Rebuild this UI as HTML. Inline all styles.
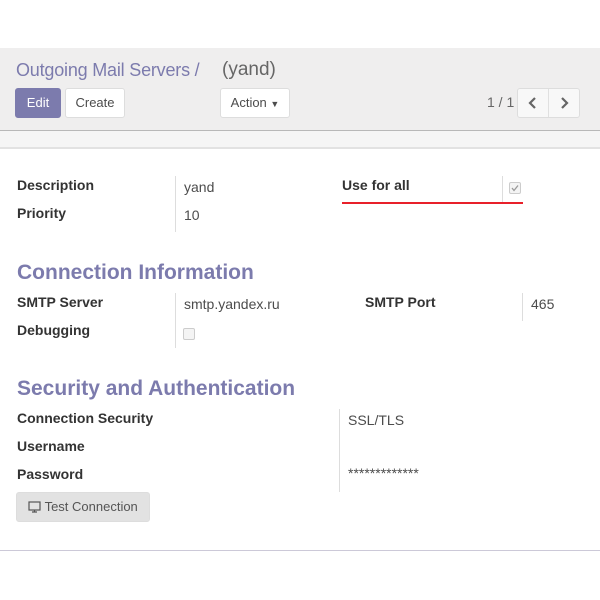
<!DOCTYPE html>
<html><head><meta charset="utf-8"><style>
body{margin:0;width:600px;height:600px;background:#fff;position:relative;font-family:"Liberation Sans",Arial,sans-serif;overflow:hidden;color:#4c4c4c}
.a{position:absolute;white-space:nowrap}
.hdr{position:absolute;left:0;top:48px;width:600px;height:82px;background:#efeeee;border-bottom:1px solid #b8b8b8}
.strip{position:absolute;left:0;top:131px;width:600px;height:16px;background:#f5f5f5;border-bottom:2px solid #e2e2e2}
.btn{position:absolute;height:30px;box-sizing:border-box;border:1px solid #ddd;background:#fff;border-radius:3px;font-size:13px;line-height:28px;text-align:center;color:#4c4c4c}
.lbl{font-weight:bold;font-size:14px;color:#333}
.val{font-size:14px;color:#4c4c4c}
.h{font-weight:bold;font-size:21px;color:#7c7bad}
.vl{position:absolute;width:1px;background:#ddd}
.cb{position:absolute;width:10px;height:10px;border:1px solid #ccc;border-radius:2px;background:#f4f4f4}
</style></head><body>
<div class="hdr"></div>
<div class="a" style="left:16px;top:60px;font-size:18px;color:#7c7bad;letter-spacing:-0.2px">Outgoing Mail Servers /</div>
<div class="a" style="left:222px;top:59px;font-size:19px;color:#666">(yand)</div>
<div class="btn" style="left:15px;top:88px;width:46px;background:#7c7bad;border-color:#7c7bad;color:#fff">Edit</div>
<div class="btn" style="left:65px;top:88px;width:60px">Create</div>
<div class="btn" style="left:220px;top:88px;width:70px">Action <span style="font-size:9px">▼</span></div>
<div class="a" style="left:487px;top:94px;font-size:14px;color:#666">1 / 1</div>
<div class="btn" style="left:517px;top:88px;width:63px;background:#f8f8f8"></div>
<div class="vl" style="left:548px;top:89px;height:28px;background:#e0e0e0"></div>
<svg class="a" style="left:527px;top:96px" width="12" height="14"><path d="M8 2 L3 7 L8 12" stroke="#666" stroke-width="2.2" fill="none"/></svg>
<svg class="a" style="left:558px;top:96px" width="12" height="14"><path d="M4 2 L9 7 L4 12" stroke="#666" stroke-width="2.2" fill="none"/></svg>
<div class="strip"></div>

<div class="a lbl" style="left:17px;top:177px">Description</div>
<div class="a lbl" style="left:17px;top:205px">Priority</div>
<div class="vl" style="left:175px;top:176px;height:56px"></div>
<div class="a val" style="left:184px;top:179px">yand</div>
<div class="a val" style="left:184px;top:207px">10</div>
<div class="a lbl" style="left:342px;top:177px">Use for all</div>
<div class="vl" style="left:502px;top:176px;height:28px"></div>
<div class="cb" style="left:509px;top:182px"></div>
<svg class="a" style="left:510px;top:183px" width="10" height="10"><path d="M2 5 L4 7.5 L8 2.5" stroke="#999" stroke-width="1.3" fill="none"/></svg>
<div class="a" style="left:342px;top:202px;width:181px;height:2px;background:#e8202a"></div>

<div class="a h" style="left:17px;top:261px">Connection Information</div>
<div class="a lbl" style="left:17px;top:294px">SMTP Server</div>
<div class="a lbl" style="left:17px;top:322px">Debugging</div>
<div class="vl" style="left:175px;top:293px;height:55px"></div>
<div class="a val" style="left:184px;top:296px">smtp.yandex.ru</div>
<div class="cb" style="left:183px;top:328px"></div>
<div class="a lbl" style="left:365px;top:294px">SMTP Port</div>
<div class="vl" style="left:522px;top:293px;height:28px"></div>
<div class="a val" style="left:531px;top:296px">465</div>

<div class="a h" style="left:17px;top:377px">Security and Authentication</div>
<div class="a lbl" style="left:17px;top:410px">Connection Security</div>
<div class="a lbl" style="left:17px;top:438px">Username</div>
<div class="a lbl" style="left:17px;top:466px">Password</div>
<div class="vl" style="left:339px;top:409px;height:83px"></div>
<div class="a val" style="left:348px;top:412px">SSL/TLS</div>
<div class="a val" style="left:348px;top:465px;font-size:14px">*************</div>
<div class="btn" style="left:16px;top:492px;width:134px;background:#e2e2e2;border-color:#ddd;color:#555">
<svg style="vertical-align:-2px" width="13" height="12"><rect x="1" y="1" width="11" height="8" fill="none" stroke="#555" stroke-width="1.2"/><path d="M4 11 H9 M6.5 9 V11" stroke="#555" stroke-width="1.2"/></svg> Test Connection</div>

<div class="a" style="left:0;top:550px;width:600px;height:1px;background:#ccc9d8"></div>
</body></html>
